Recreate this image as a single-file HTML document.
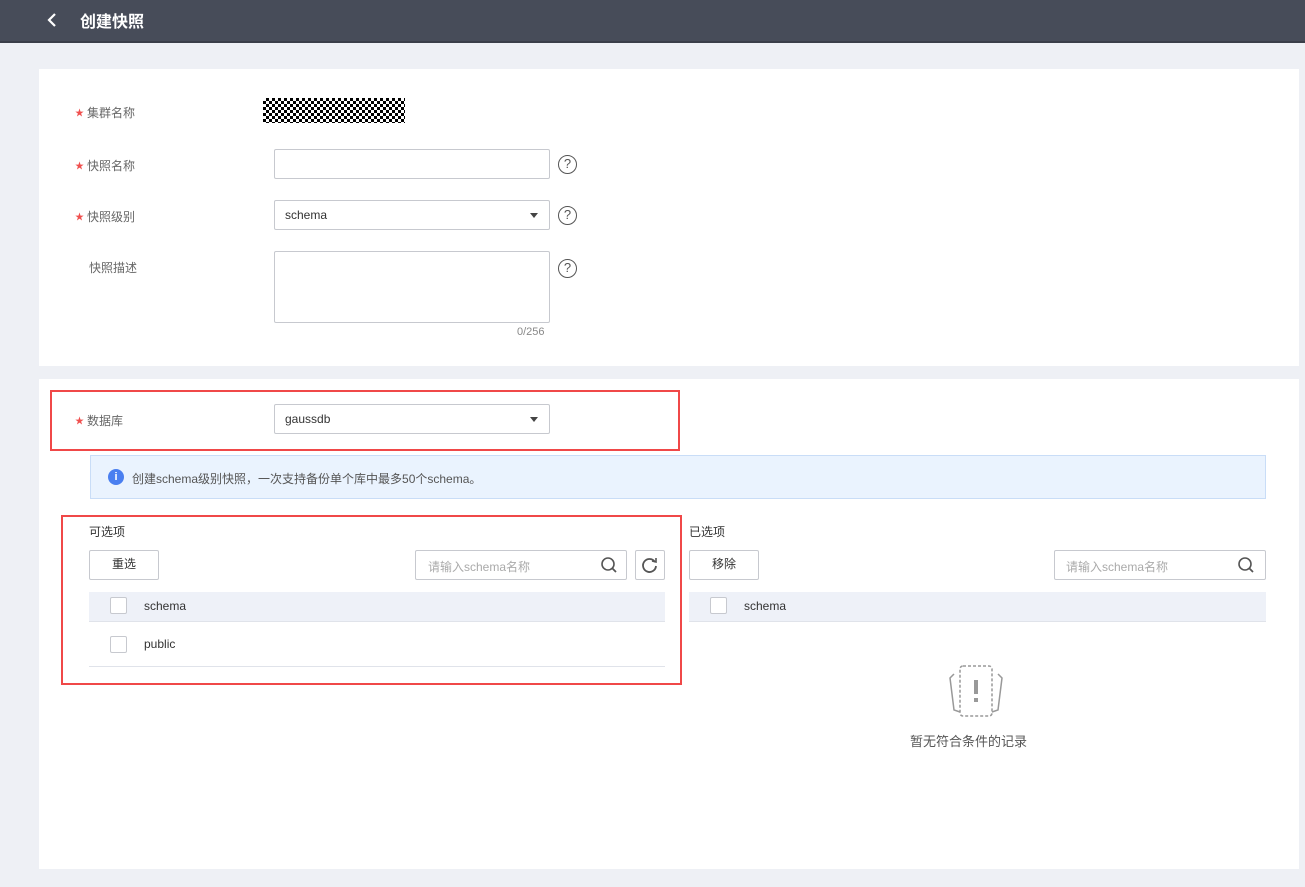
<!DOCTYPE html>
<html><head><meta charset="utf-8"><style>
*{margin:0;padding:0;box-sizing:border-box}
body{width:1305px;height:887px;background:#eef0f5;font-family:"Liberation Sans","Noto Sans CJK SC",sans-serif;font-size:12px;color:#333;position:relative;overflow:hidden}
.a{position:absolute}
.hdr{left:0;top:0;width:1305px;height:43px;background:#474c59;border-bottom:2px solid #3a3e49}
.panel{background:#fff;left:39px;width:1260px}
.lbl{color:#666;font-size:12px}
.star{color:#f0504f;margin-right:3px;font-size:9px;vertical-align:1px}
.inp{border:1px solid #c7c9cf;border-radius:2px;background:#fff}
.q{width:19px;height:19px;border:1.5px solid #555;border-radius:50%;font-size:13px;line-height:16px;text-align:center;color:#555}
.tri{width:0;height:0;border-left:4px solid transparent;border-right:4px solid transparent;border-top:5px solid #444}
.btn{border:1px solid #c7c9cf;border-radius:2px;background:#fff;text-align:center;line-height:27px;color:#333}
.cb{width:17px;height:17px;border:1px solid #c7c9cf;border-radius:2px;background:#fff}
.red{border:2px solid #f04848}
</style></head><body>
<div class="a hdr"></div>
<svg class="a" style="left:46px;top:12px" width="12" height="16"><path d="M9 2L3 8L9 14" stroke="#fff" stroke-width="2.2" fill="none"/></svg>
<div class="a" style="left:80px;top:8px;color:#fff;font-size:16px;font-weight:bold">创建快照</div>

<div class="a panel" style="top:69px;height:297px"></div>
<div class="a lbl" style="left:75px;top:104px"><span class="star">★</span>集群名称</div>
<div class="a" style="left:263px;top:98px;width:142px;height:25px;background:repeating-conic-gradient(#000 0 25%,#fff 0 50%) 0 0/6px 6px"></div>
<div class="a lbl" style="left:75px;top:157px"><span class="star">★</span>快照名称</div>
<div class="a inp" style="left:274px;top:149px;width:276px;height:30px"></div>
<div class="a q" style="left:558px;top:155px">?</div>
<div class="a lbl" style="left:75px;top:208px"><span class="star">★</span>快照级别</div>
<div class="a inp" style="left:274px;top:200px;width:276px;height:30px"></div>
<div class="a" style="left:285px;top:208px">schema</div>
<div class="a tri" style="left:530px;top:213px"></div>
<div class="a q" style="left:558px;top:206px">?</div>
<div class="a lbl" style="left:89px;top:259px">快照描述</div>
<div class="a inp" style="left:274px;top:251px;width:276px;height:72px"></div>
<div class="a q" style="left:558px;top:259px">?</div>
<div class="a" style="left:517px;top:326px;color:#888;font-size:11px">0/256</div>

<div class="a panel" style="top:379px;height:490px"></div>
<div class="a red" style="left:50px;top:390px;width:630px;height:61px"></div>
<div class="a lbl" style="left:75px;top:412px"><span class="star">★</span>数据库</div>
<div class="a inp" style="left:274px;top:404px;width:276px;height:30px"></div>
<div class="a" style="left:285px;top:412px">gaussdb</div>
<div class="a tri" style="left:530px;top:417px"></div>
<div class="a" style="left:90px;top:455px;width:1176px;height:44px;background:#eaf3fe;border:1px solid #c9ddf7"></div>
<div class="a" style="left:108px;top:469px;width:16px;height:16px;border-radius:50%;background:#4a7ff0;color:#fff;font-size:11px;font-weight:bold;text-align:center;line-height:16px">i</div>
<div class="a" style="left:132px;top:470px;color:#555">创建schema级别快照，一次支持备份单个库中最多50个schema。</div>

<div class="a red" style="left:61px;top:515px;width:621px;height:170px"></div>
<div class="a" style="left:89px;top:523px;color:#333">可选项</div>
<div class="a btn" style="left:89px;top:550px;width:70px;height:30px">重选</div>
<div class="a inp" style="left:415px;top:550px;width:212px;height:30px"></div>
<div class="a" style="left:428px;top:558px;color:#aaa">请输入schema名称</div>
<svg class="a" style="left:600px;top:556px" width="18" height="18"><circle cx="8" cy="8" r="6" stroke="#555" stroke-width="1.6" fill="none"/><path d="M12.5 12.5L16 16" stroke="#555" stroke-width="1.8"/></svg>
<div class="a inp" style="left:635px;top:550px;width:30px;height:30px"></div>
<svg class="a" style="left:641px;top:556px" width="18" height="18"><path d="M14 6A6.5 6.5 0 1 0 15 10" stroke="#555" stroke-width="1.8" fill="none"/><path d="M11 5L15 6L15 2" stroke="#555" stroke-width="1.6" fill="none"/></svg>
<div class="a" style="left:89px;top:592px;width:576px;height:30px;background:#eef1f8;border-bottom:1px solid #e0e3ea"></div>
<div class="a cb" style="left:110px;top:597px"></div>
<div class="a" style="left:144px;top:599px">schema</div>
<div class="a cb" style="left:110px;top:636px"></div>
<div class="a" style="left:144px;top:637px">public</div>
<div class="a" style="left:89px;top:666px;width:576px;height:1px;background:#e0e3ea"></div>

<div class="a" style="left:689px;top:523px;color:#333">已选项</div>
<div class="a btn" style="left:689px;top:550px;width:70px;height:30px">移除</div>
<div class="a inp" style="left:1054px;top:550px;width:212px;height:30px"></div>
<div class="a" style="left:1066px;top:558px;color:#aaa">请输入schema名称</div>
<svg class="a" style="left:1237px;top:556px" width="18" height="18"><circle cx="8" cy="8" r="6" stroke="#555" stroke-width="1.6" fill="none"/><path d="M12.5 12.5L16 16" stroke="#555" stroke-width="1.8"/></svg>
<div class="a" style="left:689px;top:592px;width:577px;height:30px;background:#eef1f8;border-bottom:1px solid #e0e3ea"></div>
<div class="a cb" style="left:710px;top:597px"></div>
<div class="a" style="left:744px;top:599px">schema</div>
<svg class="a" style="left:946px;top:662px" width="60" height="58"><path d="M8 12L4 16L8 48L14 50M52 12L56 16L52 48L46 50" stroke="#999" stroke-width="1.5" fill="none"/><rect x="14" y="4" width="32" height="50" rx="3" stroke="#999" stroke-width="1.5" fill="none" stroke-dasharray="3 2"/><rect x="28" y="18" width="4" height="14" fill="#999"/><rect x="28" y="36" width="4" height="4" fill="#999"/></svg>
<div class="a" style="left:910px;top:731px;color:#555;font-size:13px">暂无符合条件的记录</div>
</body></html>
